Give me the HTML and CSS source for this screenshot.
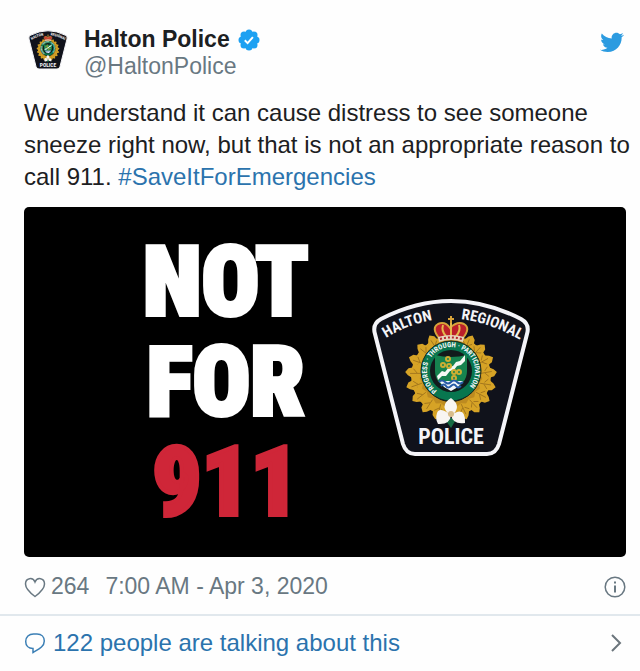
FILE: index.html
```html
<!DOCTYPE html>
<html lang="en">
<head>
  <meta charset="utf-8">
  <meta name="viewport" content="width=device-width, initial-scale=1">
  <title>Halton Police</title>
  <link rel="stylesheet" href="styles.css">
</head>
<body>
  <article class="tweet">
    <header class="header">
      <a class="author" href="#">
        <svg class="avatar" viewBox="12 12 160 160" aria-hidden="true"><use href="#crest"/></svg>
        <span class="names">
          <span class="name">Halton Police
            <svg class="verified" viewBox="0 0 22 22" aria-label="Verified">
              <g fill="#1da1f2">
                <circle cx="11" cy="11" r="8.5"/>
                <circle cx="11" cy="4" r="3.5"/><circle cx="16" cy="6" r="3.5"/>
                <circle cx="18" cy="11" r="3.5"/><circle cx="16" cy="16" r="3.5"/>
                <circle cx="11" cy="18" r="3.5"/><circle cx="6" cy="16" r="3.5"/>
                <circle cx="4" cy="11" r="3.5"/><circle cx="6" cy="6" r="3.5"/>
              </g>
              <path d="M6.8 11.3l2.8 2.8 5.3-6" fill="none" stroke="#fff" stroke-width="2"/>
            </svg>
          </span>
          <span class="handle">@HaltonPolice</span>
        </span>
      </a>
      <a class="logo" href="#" aria-label="Twitter">
        <svg viewBox="0 0 24 24"><path fill="#2c9be0" d="M23.64 4.94c-.85.38-1.78.64-2.73.76 1-.6 1.74-1.54 2.1-2.67-.93.55-1.96.95-3.06 1.17-.88-.94-2.13-1.53-3.51-1.53-2.66 0-4.81 2.16-4.81 4.82 0 .38.04.75.13 1.1-4-.2-7.58-2.11-9.96-5.02-.42.72-.66 1.56-.66 2.46 0 1.68.85 3.16 2.14 4.02-.79-.02-1.53-.24-2.18-.6v.06c0 2.35 1.67 4.31 3.88 4.76-.4.1-.83.16-1.27.16-.31 0-.62-.03-.92-.08.63 1.96 2.45 3.39 4.61 3.43-1.69 1.32-3.83 2.1-6.15 2.1-.4 0-.8-.02-1.19-.07 2.19 1.4 4.78 2.22 7.57 2.22 9.07 0 14.02-7.52 14.02-14.03 0-.21 0-.42-.01-.63.96-.7 1.8-1.56 2.46-2.55z"/></svg>
      </a>
    </header>

    <p class="text">We understand it can cause distress to see someone sneeze right now, but that is not an appropriate reason to call 911. <a href="#">#SaveItForEmergencies</a></p>

    <div class="media">
      <div class="slogan">NOT<br>FOR<br><span class="red">911</span></div>
      <svg class="crest" viewBox="12 12 160 160" role="img" aria-label="Halton Regional Police crest">
        <defs>
          <path id="arc-left" d="M27 52Q50 37 85 32"/>
          <path id="arc-right" d="M102 33Q134 37 168 58"/>
          <path id="motto" d="M78 104.500A24 24 0 1 1 106 104.500"/>
          <g id="leaf">
            <path d="M92 61l-5-2-5-1 2-4-2-3 5 0 2-4 3-3 4 3 1 4 5 0-2 3 2 4-5 1z" fill="#d6a326"/>
            <path d="M92 60l-1-11M90 56l-4-3M92 56l4-4" fill="none" stroke="#94691a" stroke-width=".7"/>
          </g>
        </defs>
        <g id="crest">
          <path d="M22 33Q92-3 162 33Q171 38 168 48L140 158Q137 168 128 168H56Q47 168 44 158L16 48Q13 38 22 33Z" fill="#10121b" stroke="#f4f4f8" stroke-width="4"/>
          <!-- wreath -->
          <circle cx="92" cy="89" r="33" fill="none" stroke="#bd8b20" stroke-width="12"/>
          <g>
            <use href="#leaf" transform="rotate(28 92 90)"/>
            <use href="#leaf" transform="rotate(47 92 90)"/>
            <use href="#leaf" transform="rotate(66 92 90)"/>
            <use href="#leaf" transform="rotate(85 92 90)"/>
            <use href="#leaf" transform="rotate(104 92 90)"/>
            <use href="#leaf" transform="rotate(123 92 90)"/>
            <use href="#leaf" transform="rotate(142 92 90)"/>
            <use href="#leaf" transform="rotate(160 92 90)"/>
            <use href="#leaf" transform="rotate(-28 92 90)"/>
            <use href="#leaf" transform="rotate(-47 92 90)"/>
            <use href="#leaf" transform="rotate(-66 92 90)"/>
            <use href="#leaf" transform="rotate(-85 92 90)"/>
            <use href="#leaf" transform="rotate(-104 92 90)"/>
            <use href="#leaf" transform="rotate(-123 92 90)"/>
            <use href="#leaf" transform="rotate(-142 92 90)"/>
            <use href="#leaf" transform="rotate(-160 92 90)"/>
          </g>
          <!-- motto ring and shield -->
          <circle cx="92" cy="85" r="30" fill="#08764f" stroke="#15251f"/>
          <circle cx="92" cy="85" r="21" fill="#121b1c"/>
          <path d="M76 69Q92 73 108 69V85Q108 98 92 104Q76 98 76 85Z" fill="#16834f"/>
          <path d="M78 90l5-5 3 1 4-5 4-1 3-4 4-1 5-6v6l-4 4-4 1-3 4-4 1-4 5-4 0-4 4z" fill="#f5f8f5"/>
          <g fill="none" stroke="#cdae32" stroke-width="2">
            <circle cx="89" cy="73" r="2"/><circle cx="84" cy="79" r="2"/><circle cx="90" cy="80" r="2"/>
            <circle cx="95" cy="86" r="2"/><circle cx="100" cy="86" r="2"/><circle cx="95" cy="92" r="2"/>
          </g>
          <path d="M80 95h24l-5 6-7 4-7-4z" fill="#f4f6fa"/>
          <path d="M80 96q3-3 6 0t6 0 6 0 6 0M82 100q3-3 5 0t5 0 5 0 5 0" fill="none" stroke="#275ba6" stroke-width="2"/>
          <text class="motto"><textPath href="#motto">PROGRESS · THROUGH · PARTICIPATION</textPath></text>
          <!-- crown -->
          <path d="M80 52Q72 42 79 38Q86 35 91 42Q98 35 105 38Q112 42 104 52Z" fill="#bc1f2a" stroke="#d7a33a" stroke-width="2"/>
          <path d="M92 36v15M84 39q-2 6 3 11M100 39q2 6-3 11" fill="none" stroke="#e4b84c" stroke-width="2"/>
          <path d="M92 30v7M89 33h6" stroke="#d7a33a" stroke-width="2"/>
          <path d="M79 51q13-4 26 0l-1 5q-12-4-24 0z" fill="#e7d5bd"/>
          <path d="M81 53q11-3 22 0" fill="none" stroke="#b52a32" stroke-width="2" stroke-dasharray="2 2"/>
          <!-- trillium -->
          <path d="M85 132l7 10 6-10z" fill="#176b43"/>
          <path d="M92 130Q79 120 92 112Q104 121 92 130ZM92 129Q80 120 78 127Q76 133 79 138Q91 139 92 129ZM92 129Q94 139 106 137Q107 119 92 129Z" fill="#f8f5f2"/>
          <circle cx="92" cy="128" r="3" fill="#d8bc8a"/>
          <text class="arc"><textPath href="#arc-left">HALTON</textPath></text>
          <text class="arc"><textPath href="#arc-right">REGIONAL</textPath></text>
          <text class="police" x="92" y="158">POLICE</text>
        </g>
      </svg>
    </div>

    <div class="meta">
      <a class="likes" href="#">
        <svg class="icon" viewBox="0 0 22 22"><path d="M11 20.500C7 17.500 1.500 13 1.500 8C1.500 1.500 9 1 11 6C13 1 20.500 1.500 20.500 8C20.500 13 15 17.500 11 20.500Z" fill="none" stroke="#697882" stroke-width="1.500"/></svg>
        264
      </a>
      <a class="date" href="#">7:00 AM - Apr 3, 2020</a>
      <a class="info" href="#" aria-label="Twitter Ads info and privacy">
        <svg class="icon" viewBox="0 0 22 22"><circle cx="11" cy="11" r="9.800" fill="none" stroke="#697882" stroke-width="1.500"/><path d="M11 9.500v7M11 5.500v2" stroke="#697882" stroke-width="2"/></svg>
      </a>
    </div>

    <a class="replies" href="#">
      <svg class="icon" viewBox="0 0 22 22"><path d="M9 16.500C4.500 16.500 1.700 13.500 1.700 9.500C1.700 5 5 2 9.500 2H13C17.500 2 20.300 5 20.300 9C20.300 15 14 17.500 9 20.500Z" fill="none" stroke="#3b7fb5" stroke-width="1.500"/></svg>
      122 people are talking about this
      <svg class="chevron" viewBox="0 0 12 20"><path d="M2 2l8 8-8 8" fill="none" stroke="#6b757c" stroke-width="2"/></svg>
    </a>
  </article>
</body>
</html>
```

FILE: styles.css
```css
body {
  margin: 0;
  background: #fefefe;
  color: #1c2022;
  font-family: "Liberation Sans", Arial, sans-serif;
  font-size: 24px;
}
a {
  color: #2b73ad;
  text-decoration: none;
}
svg {
  display: block;
}
.header {
  display: flex;
  justify-content: space-between;
  padding: 26px 16px 0 24px;
}
.author {
  display: flex;
  gap: 12px;
  color: #1c2022;
}
.avatar {
  width: 40px;
  height: 40px;
  margin: 4px;
}
.names {
  display: flex;
  flex-direction: column;
  font-size: 23px;
  line-height: 27px;
}
.name {
  display: flex;
  align-items: center;
  gap: 8px;
  font-weight: bold;
}
.verified {
  width: 22px;
  height: 22px;
}
.handle {
  color: #697882;
}
.logo svg {
  width: 24px;
  height: 24px;
  margin-top: 4px;
}
.text {
  margin: 17px 8px 14px 24px;
  line-height: 32px;
}
.media {
  display: flex;
  justify-content: space-between;
  align-items: center;
  margin: 0 14px 0 24px;
  padding: 25px 95px 25px 119px;
  background: #000;
  border-radius: 5px;
}
.slogan {
  color: #fff;
  font-family: Impact, "Roboto Condensed", sans-serif;
  font-size: 96px;
  font-weight: 900;
  line-height: 100px;
  text-align: center;
  -webkit-text-stroke: 4px;
}
.red {
  color: #cf2638;
}
.crest {
  width: 160px;
  height: 160px;
  margin-bottom: 8px;
}
.motto, .arc, .police {
  fill: #f4f4f8;
  font-family: "Roboto Condensed", sans-serif;
  font-weight: bold;
}
.motto {
  font-size: 7px;
}
.arc {
  font-size: 15px;
}
.police {
  font-size: 22px;
  text-anchor: middle;
}
.meta {
  display: flex;
  align-items: center;
  gap: 16px;
  padding: 15px 14px 13px 24px;
  font-size: 23px;
  line-height: 29px;
}
.meta a {
  color: #697882;
}
.likes {
  display: flex;
  align-items: center;
  gap: 5px;
}
.icon {
  width: 22px;
  height: 22px;
}
.info {
  margin-left: auto;
}
.replies {
  display: flex;
  align-items: center;
  gap: 7px;
  padding: 13px 18px 14px 24px;
  border-top: 2px solid #e1e8ed;
  line-height: 28px;
}
.chevron {
  width: 12px;
  height: 20px;
  margin-left: auto;
}
```
